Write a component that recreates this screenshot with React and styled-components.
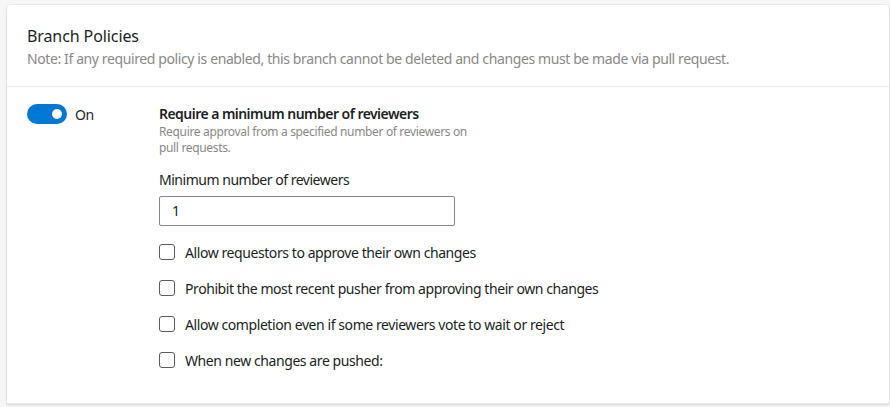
import React from "react";
import styled, { createGlobalStyle } from "styled-components";

const Global = createGlobalStyle`
  html, body { margin: 0; padding: 0; background: #f6f6f6; }
  body { font-family: "Segoe UI", "Noto Sans", "Liberation Sans", sans-serif; color: #201f1e; }
  * { box-sizing: border-box; }
`;

const Page = styled.div`
  padding: 5px 1px 0 7px;
  height: 407px;
  overflow: hidden;
`;

const Card = styled.section`
  background: #fff;
  border-radius: 4px 4px 0 0;
  box-shadow: 0 0 0 1px rgba(0,0,0,0.04), 0 1px 3px rgba(0,0,0,0.10);
  height: 399px;
  border-bottom: 1px solid #e8e8e8;
`;

const Header = styled.header`
  padding: 20px 20px 17px;
  border-bottom: 1px solid #eaeaea;
`;

const Title = styled.h2`
  margin: 0;
  font-size: 16px;
  font-weight: 400;
  line-height: 22px;
  letter-spacing: -0.1px;
  color: #201f1e;
`;

const Note = styled.p`
  margin: 2px 0 0;
  font-size: 14px;
  line-height: 20px;
  letter-spacing: -0.39px;
  color: #8a8886;
`;

const Body = styled.div`
  display: grid;
  grid-template-columns: 132px 1fr;
  padding: 14px 20px 0;
`;

const ToggleWrap = styled.label`
  display: flex;
  align-items: center;
  gap: 8px;
  height: 22px;
  margin-top: 2px;
  font-size: 14px;
  letter-spacing: -0.4px;
`;

const Track = styled.span`
  width: 40px;
  height: 20px;
  border-radius: 10px;
  background: #0078d4;
  position: relative;
  &::after {
    content: "";
    position: absolute;
    top: 5px;
    right: 5px;
    width: 10px;
    height: 10px;
    border-radius: 50%;
    background: #fff;
  }
`;

const Policy = styled.div`
  display: flex;
  flex-direction: column;
`;

const PolicyTitle = styled.div`
  font-size: 14px;
  font-weight: 600;
  line-height: 20px;
  letter-spacing: -0.54px;
  margin-top: 3px;
`;

const PolicyDesc = styled.div`
  font-size: 12px;
  line-height: 16px;
  letter-spacing: -0.34px;
  color: #8a8886;
  width: 320px;
`;

const FieldLabel = styled.div`
  font-size: 14px;
  line-height: 20px;
  letter-spacing: -0.48px;
  margin-top: 14px;
`;

const Input = styled.div`
  margin-top: 6px;
  width: 296px;
  height: 30px;
  border: 1px solid #8a8886;
  border-radius: 2px;
  font-size: 14px;
  line-height: 28px;
  padding-left: 12px;
`;

const Checks = styled.div`
  display: flex;
  flex-direction: column;
  gap: 16px;
  margin-top: 16px;
`;

const CheckRow = styled.label`
  display: flex;
  align-items: center;
  gap: 10px;
  height: 20px;
  font-size: 14px;
  letter-spacing: -0.42px;
`;

const Box = styled.span`
  width: 16px;
  height: 16px;
  border: 1px solid #605e5c;
  border-radius: 3px;
  flex: none;
`;

const options = [
  "Allow requestors to approve their own changes",
  "Prohibit the most recent pusher from approving their own changes",
  "Allow completion even if some reviewers vote to wait or reject",
  "When new changes are pushed:",
];

export default function App() {
  return (
    <>
      <Global />
      <Page>
        <Card>
          <Header>
            <Title>Branch Policies</Title>
            <Note>Note: If any required policy is enabled, this branch cannot be deleted and changes must be made via pull request.</Note>
          </Header>
          <Body>
            <div>
              <ToggleWrap>
                <Track />
                On
              </ToggleWrap>
            </div>
            <Policy>
              <PolicyTitle>Require a minimum number of reviewers</PolicyTitle>
              <PolicyDesc>Require approval from a specified number of reviewers on pull requests.</PolicyDesc>
              <FieldLabel>Minimum number of reviewers</FieldLabel>
              <Input>1</Input>
              <Checks>
                {options.map((o) => (
                  <CheckRow key={o}>
                    <Box />
                    {o}
                  </CheckRow>
                ))}
              </Checks>
            </Policy>
          </Body>
        </Card>
      </Page>
    </>
  );
}
